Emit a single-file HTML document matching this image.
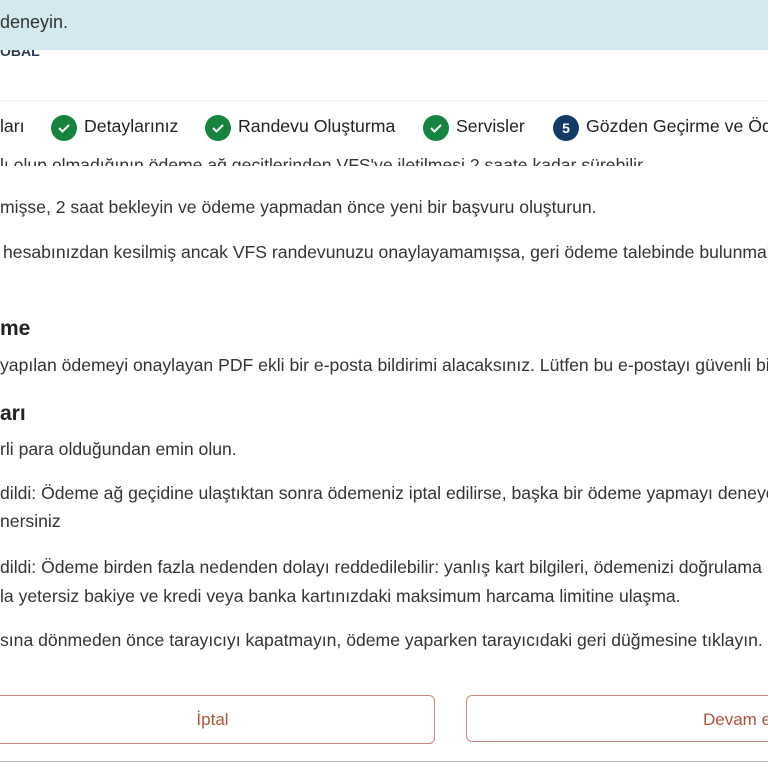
<!DOCTYPE html><html><head><meta charset="utf-8"><style>
body{margin:0;width:768px;height:768px;overflow:hidden;background:#fff;font-family:"Liberation Sans",sans-serif;position:relative;color:#333}
.a{position:absolute;white-space:nowrap}
.t{font-size:17.6px;color:#333}
.h{font-size:21px;font-weight:bold;color:#222}
.st{font-size:17.7px;color:#222;top:116px}
.c{position:absolute;top:115px;width:26px;height:26px;border-radius:50%;background:#16833f}
.c svg{position:absolute;left:6px;top:7px}
.btn{position:absolute;top:695px;height:47px;border:1px solid #c58a7d;border-radius:6px;color:#b2543b;font-size:17px;text-align:center;line-height:47px}
</style></head><body>
<div class="a" style="top:0;left:0;width:768px;height:50px;background:#d1e9ef"></div>
<div class="a" style="top:12px;left:0;font-size:18px;color:#333">deneyin.</div>
<div class="a" style="top:50px;left:0;font-size:14px;font-weight:bold;color:#2a3a55;height:8px;overflow:hidden;line-height:2px">OBAL</div>
<div class="a" style="top:100px;left:0;width:768px;height:1px;background:#eee"></div>
<div class="a st" style="left:0">ları</div>
<div class="c" style="left:51px"><svg width="14" height="12"><path d="M2 6l3.5 3.5L12 3" stroke="#fff" stroke-width="2" fill="none"/></svg></div>
<div class="a st" style="left:84px">Detaylarınız</div>
<div class="c" style="left:205px"><svg width="14" height="12"><path d="M2 6l3.5 3.5L12 3" stroke="#fff" stroke-width="2" fill="none"/></svg></div>
<div class="a st" style="left:238px">Randevu Oluşturma</div>
<div class="c" style="left:423px"><svg width="14" height="12"><path d="M2 6l3.5 3.5L12 3" stroke="#fff" stroke-width="2" fill="none"/></svg></div>
<div class="a st" style="left:456px">Servisler</div>
<div class="c" style="left:553px;background:#113a66;color:#fff;font-weight:bold;font-size:14px;text-align:center;line-height:26px">5</div>
<div class="a st" style="left:586px">Gözden Geçirme ve Ödeme</div>
<div class="a t" style="top:152px;left:0;height:14px;overflow:hidden;line-height:26px">lı olup olmadığının ödeme ağ geçitlerinden VFS'ye iletilmesi 2 saate kadar sürebilir.</div>
<div class="a t" style="top:197px;left:0">mişse, 2 saat bekleyin ve ödeme yapmadan önce yeni bir başvuru oluşturun.</div>
<div class="a t" style="top:242px;left:3px">hesabınızdan kesilmiş ancak VFS randevunuzu onaylayamamışsa, geri ödeme talebinde bulunmak</div>
<div class="a h" style="top:317px;left:0">me</div>
<div class="a t" style="top:355px;left:0">yapılan ödemeyi onaylayan PDF ekli bir e-posta bildirimi alacaksınız. Lütfen bu e-postayı güvenli bir</div>
<div class="a h" style="top:402px;left:0">arı</div>
<div class="a t" style="top:439px;left:0">rli para olduğundan emin olun.</div>
<div class="a t" style="top:483px;left:0">dildi: Ödeme ağ geçidine ulaştıktan sonra ödemeniz iptal edilirse, başka bir ödeme yapmayı deneye</div>
<div class="a t" style="top:511px;left:0">nersiniz</div>
<div class="a t" style="top:557px;left:0">dildi: Ödeme birden fazla nedenden dolayı reddedilebilir: yanlış kart bilgileri, ödemenizi doğrulama</div>
<div class="a t" style="top:586px;left:0">la yetersiz bakiye ve kredi veya banka kartınızdaki maksimum harcama limitine ulaşma.</div>
<div class="a t" style="top:630px;left:0">sına dönmeden önce tarayıcıyı kapatmayın, ödeme yaparken tarayıcıdaki geri düğmesine tıklayın.</div>
<div class="btn" style="left:-10px;width:443px">İptal</div>
<div class="btn" style="left:466px;width:330px;text-align:left;padding-left:236px;box-sizing:border-box">Devam et</div>
<div class="a" style="top:761px;left:0;width:768px;height:1px;background:#bbb"></div>
</body></html>
